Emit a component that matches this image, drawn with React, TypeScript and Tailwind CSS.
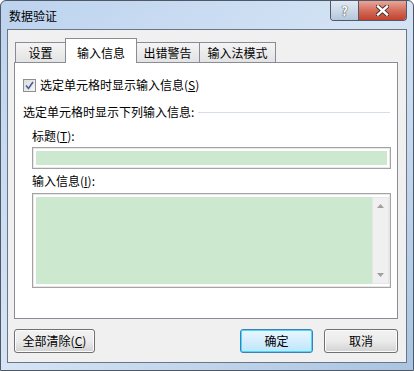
import React from "react";

const font = { fontFamily: '"Microsoft YaHei", "Noto Sans CJK SC", "Liberation Sans", sans-serif' };

function Tab({ label, active, className }: { label: string; active?: boolean; className?: string }) {
  if (active) {
    return (
      <div
        className={
          "relative z-10 -mb-px -mx-px flex h-[25px] items-start justify-center border border-b-0 border-[#898c95] bg-white pt-[5px] text-[12px] leading-[18px] text-black " +
          (className ?? "")
        }
      >
        {label}
      </div>
    );
  }
  return (
    <div
      className={
        "flex h-[20px] items-start justify-center border border-b-0 border-[#898c95] bg-gradient-to-b from-[#f4f4f4] to-[#e3e3e3] pt-px text-[12px] leading-[18px] text-black " +
        (className ?? "")
      }
    >
      {label}
    </div>
  );
}

function Button({ children, focused, className }: { children: React.ReactNode; focused?: boolean; className?: string }) {
  return (
    <div
      className={
        "flex h-[24px] items-center justify-center rounded-[3px] border text-[12px] text-black " +
        (focused
          ? "border-[#3c7fb1] bg-gradient-to-b from-[#eaf6fd] to-[#bee6fd] shadow-[inset_0_0_0_1px_#48d8fb] "
          : "border-[#707070] bg-gradient-to-b from-[#f2f2f2] via-[#ebebeb] to-[#d2d2d2] shadow-[inset_0_0_0_1px_#fcfcfc] ") +
        (className ?? "")
      }
    >
      {children}
    </div>
  );
}

export default function App() {
  return (
    <div className="h-[371px] w-[414px] overflow-hidden bg-[#ffffff]" style={font}>
      <div className="flex h-full w-full flex-col rounded-t-[6px] border border-[#4e5866] bg-gradient-to-br from-[#bcd3ee] via-[#d6e4f5] to-[#a9c4e0]">
        {/* Title bar */}
        <div className="flex h-[28px] shrink-0 items-start">
          <div className="pl-[8px] pt-[6px] text-[12px] text-black">数据验证</div>
          <div className="ml-auto mr-[6px] flex h-[20px] overflow-hidden rounded-b-[4px] border border-t-0 border-[#4e5a6a]">
            <div className="flex w-[28px] items-center justify-center border-r border-[#4e5a6a] bg-gradient-to-b from-[#e0e9f4] via-[#cdd9e8] to-[#b4c6da] text-[13px] font-bold text-white [text-shadow:0_0_1px_#333,0_0_1px_#333]">
              ?
            </div>
            <div className="flex w-[47px] items-center justify-center bg-gradient-to-b from-[#e7a79b] via-[#d46c5a] to-[#c1412b]">
              <svg width="13" height="11" viewBox="0 0 13 11">
                <path d="M2 1.5 L11 9.5 M11 1.5 L2 9.5" stroke="#3d2a28" strokeWidth="4.2" strokeLinecap="square" />
                <path d="M2 1.5 L11 9.5 M11 1.5 L2 9.5" stroke="#ffffff" strokeWidth="2.4" strokeLinecap="square" />
              </svg>
            </div>
          </div>
        </div>

        {/* Client area */}
        <div className="mx-[6px] mb-[7px] flex flex-1 flex-col border border-[#6a7685] bg-[#f0f0f0] pl-[6px] pr-[8px] pt-[8px]">
          <div className="flex items-end pl-px">
            <Tab label="设置" className="w-[51px]" />
            <Tab label="输入信息" active className="w-[72px]" />
            <Tab label="出错警告" className="w-[64px] border-l-0" />
            <Tab label="输入法模式" className="w-[76px] border-l-0" />
          </div>
          <div className="h-[257px] border border-[#898c95] bg-white pl-[8px] pr-[6px] pt-[13px]">
            <div className="flex h-[18px] items-center gap-[4px] text-[12px] text-black">
              <div className="flex h-[13px] w-[13px] items-center justify-center border border-[#8e8f8f] bg-gradient-to-br from-[#dcdcdc] to-[#f6f6f6]">
                <svg width="9" height="9" viewBox="0 0 9 9">
                  <path d="M1 4.5 L3.5 7.5 L8 1" fill="none" stroke="#4a5f97" strokeWidth="1.6" />
                </svg>
              </div>
              <span>
                选定单元格时显示输入信息(<span className="underline">S</span>)
              </span>
            </div>

            <div className="mt-[9px] flex h-[18px] items-center gap-[4px] text-[12px] text-black">
              <span>选定单元格时显示下列输入信息:</span>
              <div className="mr-px h-px flex-1 bg-[#d5dfe5]" />
            </div>

            <div className="pl-[9px]">
              <div className="mt-[6px] h-[18px] text-[12px] leading-[18px] text-black">
                标题(<span className="underline">T</span>):
              </div>
              <div className="mt-[2px] h-[22px] border border-[#a3a3a3] bg-white p-[3px] shadow-[inset_0_0_0_1px_#e8e8e8]">
                <div className="h-full w-full bg-[#cce8cf]" />
              </div>
              <div className="mt-[3px] h-[18px] text-[12px] leading-[18px] text-black">
                输入信息(<span className="underline">I</span>):
              </div>
              <div className="mt-[3px] flex h-[95px] border border-[#a3a3a3] bg-white py-[3px] pl-[3px] pr-px shadow-[inset_0_0_0_1px_#e8e8e8]">
                <div className="flex-1 bg-[#cce8cf]" />
                <div className="flex w-[17px] flex-col items-center justify-between border border-[#e6e6e6] bg-[#f0f0f0] py-[6px]">
                  <svg width="7" height="4" viewBox="0 0 7 4"><path d="M0 4 L3.5 0 L7 4 Z" fill="#a0a0a0" /></svg>
                  <svg width="7" height="4" viewBox="0 0 7 4"><path d="M0 0 L3.5 4 L7 0 Z" fill="#a0a0a0" /></svg>
                </div>
              </div>
            </div>
          </div>

          <div className="mt-[10px] flex">
            <Button className="w-[81px]">
              全部清除(<span className="underline">C</span>)
            </Button>
            <Button focused className="ml-auto w-[73px]">
              确定
            </Button>
            <Button className="ml-[11px] w-[74px]">取消</Button>
          </div>
        </div>
      </div>
    </div>
  );
}
